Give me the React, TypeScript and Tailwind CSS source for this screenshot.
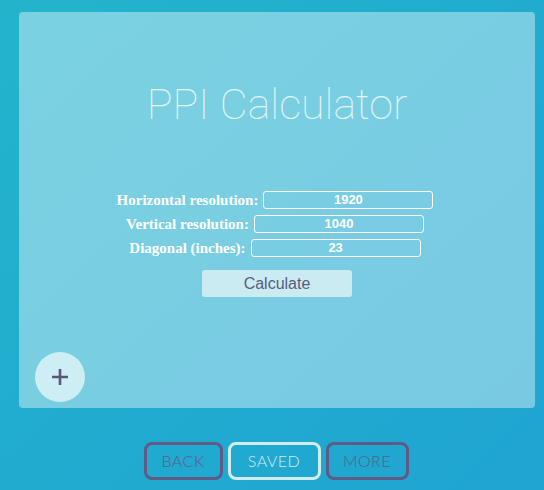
import { useState } from 'react';

const fields = [
  { label: 'Horizontal resolution:', value: '1920' },
  { label: 'Vertical resolution:', value: '1040' },
  { label: 'Diagonal (inches):', value: '23' },
];

const navButtons = [
  { title: 'BACK', active: false, width: 'w-[79px]' },
  { title: 'SAVED', active: true, width: 'w-[93px]' },
  { title: 'MORE', active: false, width: 'w-[83px]' },
];

const App = () => {
  const [values, setValues] = useState(fields.map((f) => f.value));

  return (
    <div className="w-[544px] h-[490px] overflow-hidden bg-gradient-to-br from-[#23b4cc] to-[#20a4d2] pt-3 pl-[19px] pr-[9px]">
      <div className="relative h-[396px] rounded bg-white/40 flex flex-col items-center">
        <h1 className="mt-[64px] text-[43px] leading-[56px] font-thin text-[#e4f6f8] font-['Roboto',sans-serif]">
          PPI Calculator
        </h1>
        <div className="mt-[59px] flex flex-col items-center gap-[6px] pr-[4px]">
          {fields.map((field, index) => (
            <div key={index} className="flex items-center gap-[5px] h-[18px]">
              <span className="text-[15px] leading-[18px] font-bold text-white font-['Liberation_Serif',serif]">
                {field.label}
              </span>
              <input
                value={values[index]}
                onChange={(e) => {
                  const next = [...values];
                  next[index] = e.target.value;
                  setValues(next);
                }}
                className="w-[170px] h-[18px] rounded-[3px] border border-white bg-transparent text-center text-[13px] font-bold text-white font-['Liberation_Sans',sans-serif] outline-none"
              />
            </div>
          ))}
        </div>
        <button className="mt-[13px] w-[150px] h-[27px] rounded-[3px] bg-[#cbebf3] text-[16px] text-[#5b5b7c] font-['Liberation_Sans',sans-serif]">
          Calculate
        </button>
        <button className="absolute left-4 bottom-[6px] w-[50px] h-[50px] rounded-full bg-[#cdeef4] flex items-center justify-center">
          <svg width="18" height="18" viewBox="0 0 18 18">
            <path d="M9 1v16M1 9h16" stroke="#5a5678" strokeWidth="2.6" />
          </svg>
        </button>
      </div>
      <div className="mt-[34px] flex justify-center gap-[5px] pr-[2px]">
        {navButtons.map((item, index) => (
          <button
            key={index}
            className={`${item.width} h-[38px] rounded-lg border-[3px] text-[16px] tracking-[0.5px] font-light font-['Lato',sans-serif] ${
              item.active
                ? 'border-[#d2ece9] text-[#d2ece9]'
                : 'border-[#5f5a86] text-[#5f5a86]'
            }`}
          >
            {item.title}
          </button>
        ))}
      </div>
    </div>
  );
};

export default App;
